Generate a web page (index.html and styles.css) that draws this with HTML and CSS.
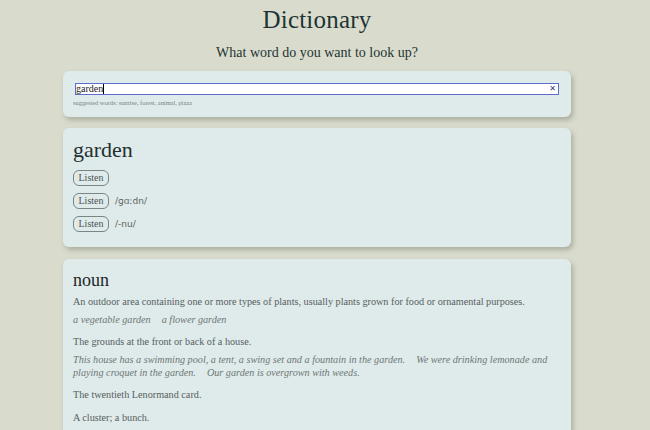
FILE: index.html
```html
<!DOCTYPE html>
<html>
<head>
<meta charset="utf-8">
<link rel="stylesheet" href="styles.css">
</head>
<body>
<div class="page">
  <h1 class="title">Dictionary</h1>
  <h2 class="subtitle">What word do you want to look up?</h2>
  <section class="card search">
    <div class="field"><span class="value">garden</span><span class="clear">✕</span></div>
    <div class="hint">suggested words: sunrise, forest, animal, pizza</div>
  </section>
  <section class="card word">
    <div class="headword">garden</div>
    <div class="phon"><button class="listen">Listen</button></div>
    <div class="phon"><button class="listen">Listen</button><span class="ipa">/ɡɑːdn/</span></div>
    <div class="phon"><button class="listen">Listen</button><span class="ipa">/-nu/</span></div>
  </section>
  <section class="card meaning">
    <div class="pos">noun</div>
    <div class="def">
      <p class="text">An outdoor area containing one or more types of plants, usually plants grown for food or ornamental purposes.</p>
      <p class="ex"><span>a vegetable garden</span><span>a flower garden</span></p>
    </div>
    <div class="def">
      <p class="text">The grounds at the front or back of a house.</p>
      <p class="ex"><span>This house has a swimming pool, a tent, a swing set and a fountain in the garden.</span><span>We were drinking lemonade and playing croquet in the garden.</span><span>Our garden is overgrown with weeds.</span></p>
    </div>
    <div class="def">
      <p class="text">The twentieth Lenormand card.</p>
    </div>
    <div class="def">
      <p class="text">A cluster; a bunch.</p>
    </div>
  </section>
</div>
</body>
</html>
```
FILE: styles.css
```css
* { box-sizing: border-box; }
html, body { margin: 0; padding: 0; }
body {
  background: #d9dccd;
  font-family: "Liberation Serif", serif;
  color: #1f3030;
  overflow: hidden;
}
.page {
  width: 508px;
  margin-left: 63px;
  padding-top: 5px;
}
.title {
  margin: 0;
  text-align: center;
  font-weight: 400;
  font-size: 25px;
  line-height: 30px;
  letter-spacing: 0.2px;
  color: #1e3434;
}
.subtitle {
  margin: 9px 0 0;
  text-align: center;
  font-weight: 400;
  font-size: 14px;
  line-height: 17px;
  color: #1e3434;
}
.card {
  background: #dfeaea;
  border-radius: 6px;
  box-shadow: 2px 3px 5px rgba(80, 90, 70, 0.35);
}
.search {
  margin-top: 10px;
  padding: 12px 12px 10px;
}
.field {
  height: 12px;
  background: #fff;
  border: 1px solid #5f6bd0;
  display: flex;
  align-items: center;
  justify-content: space-between;
  font-size: 10px;
  line-height: 10px;
  color: #222;
}
.value { border-right: 1px solid #000; }
.clear {
  font-family: "DejaVu Sans", sans-serif;
  font-size: 8px;
  font-weight: 700;
  color: #2c3a8a;
  padding-right: 2px;
}
.hint {
  margin-top: 4px;
  margin-left: -2px;
  font-size: 6.4px;
  line-height: 8px;
  color: #7a8180;
}
.word {
  margin-top: 11px;
  padding: 9px 10px 15px;
}
.headword {
  font-size: 22px;
  line-height: 26px;
  color: #223030;
}
.phon {
  display: flex;
  align-items: center;
  gap: 6px;
  margin-top: 7px;
}
.phon:first-of-type { margin-top: 3px; }
.listen {
  font-family: "Liberation Serif", serif;
  font-size: 10px;
  color: #4a5555;
  background: transparent;
  border: 1px solid #7c8585;
  border-radius: 6px;
  height: 16px;
  width: 36px;
  padding: 0;
  line-height: 14px;
}
.ipa {
  font-family: "DejaVu Sans", sans-serif;
  font-size: 9px;
  color: #5b6565;
}
.meaning {
  margin-top: 12px;
  padding: 11px 10px 20px;
  min-height: 200px;
}
.pos {
  font-size: 18px;
  line-height: 20px;
  color: #1a2626;
}
.def { margin-top: 5px; }
.def + .def { margin-top: 9px; }
.text {
  margin: 0;
  font-size: 10.2px;
  line-height: 14px;
  color: #56605f;
}
.ex {
  margin: 4px 0 0;
  font-size: 10.2px;
  line-height: 13px;
  font-style: italic;
  color: #6d7776;
}
.ex span { margin-right: 11px; }
```
